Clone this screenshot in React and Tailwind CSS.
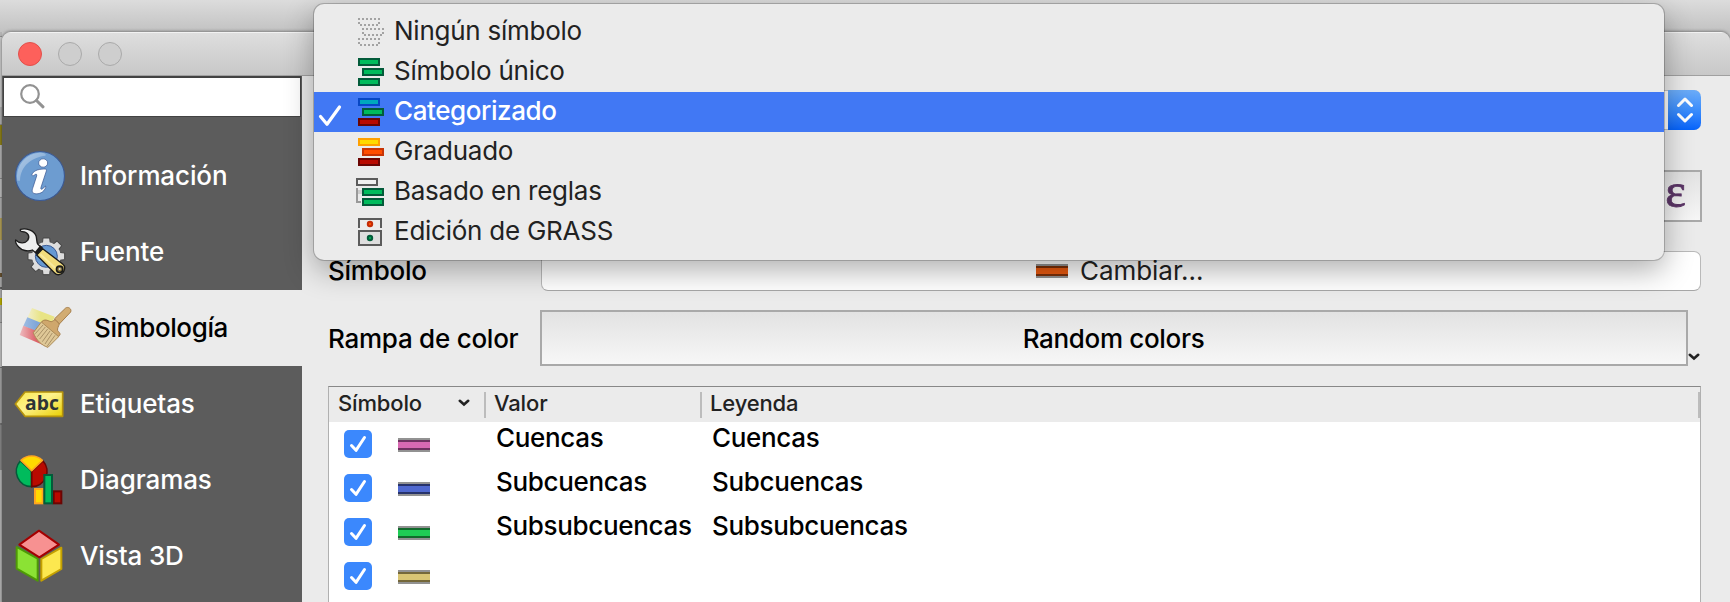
import React from "react";

/* ---------- sidebar icons ---------- */

const InfoIcon = () => (
  <svg width="52" height="52" viewBox="42 30 156 156">
    <defs>
      <linearGradient id="infoGloss" x1="0" y1="0" x2="1" y2="1">
        <stop offset="0" stopColor="#fff" stopOpacity=".45" />
        <stop offset="1" stopColor="#fff" stopOpacity=".1" />
      </linearGradient>
    </defs>
    <circle cx="120" cy="108" r="73.5" fill="#6d9cd0" stroke="#3c5a94" strokeWidth="3.5" />
    <path d="M52 122 C46 78 76 40 120 38 C134 38 140 42 136 47 C100 52 62 72 60 122 Z" fill="url(#infoGloss)" />
    <g fill="#fff" stroke="#34508c" strokeWidth="2">
      <ellipse cx="129.500" cy="69" rx="13.500" ry="12.500" />
      <path d="M97 101 C104 90 118 87 136 87 C139 87 140 90 139 93 L123 142 C121 148 124 149 128 146 L137 138 C139 143 133 151 127 156 C118 163 99 164 97 155 C96 151 97 148 99 142 L110 108 C111 103 109 101 105 104 L99 108 C96 107 95 104 97 101 Z" />
    </g>
  </svg>
);

const TEETH = [0, 45, 90, 135, 180, 225, 270, 315];

const SourceIcon = () => (
  <svg width="52" height="52" viewBox="42 258 156 156">
    <g stroke="#444" strokeWidth="3" fill="#dcdcdc">
      {TEETH.map((a) => (
        <path key={a} d="M127 312 L129 294 H149 L151 312 Z" transform={`rotate(${a} 139 349)`} />
      ))}
    </g>
    <circle cx="139" cy="349" r="43" fill="#dedede" />
    <circle cx="139" cy="349" r="33" fill="#6699d2" stroke="#3c5a94" strokeWidth="3" />
    <path
      d="M62 268 C78 264 101 270 108 287 C111 296 109 305 113 312 L122 321 L108 339 L97 330 C83 336 65 331 56 321 C49 313 45 306 47 300 C58 311 75 311 83 301 C91 289 84 276 67 275 C62 275 59 270 62 268 Z"
      fill="#eeefef" stroke="#1d1d1d" strokeWidth="4" strokeLinejoin="round"
    />
    <path d="M121 316 L130 324 L112 345 L104 337 Z" fill="#1a1a1a" />
    <path d="M128 326 L188 372 C200 382 192 402 177 404 C171 405 167 402 163 398 L110 345 Z" fill="#f2dc7c" stroke="#1a1a1a" strokeWidth="4" strokeLinejoin="round" />
    <path d="M121 343 L166 384" stroke="#f8eaa0" strokeWidth="6" />
    <circle cx="179" cy="388" r="9.500" fill="#8c7a3c" stroke="#1a1a1a" strokeWidth="5" />
    <circle cx="179" cy="387" r="3" fill="#ddd" />
  </svg>
);

const SymbologyIcon = () => (
  <svg width="54" height="44" viewBox="57 52 162 132">
    <defs>
      <linearGradient id="fy" x1="0" x2="1"><stop offset="0" stopColor="#f2eecb" /><stop offset=".5" stopColor="#e8e485" /></linearGradient>
      <linearGradient id="fb" x1="0" x2="1"><stop offset="0" stopColor="#9dbce2" /><stop offset=".5" stopColor="#7fa6d9" /></linearGradient>
      <linearGradient id="fr" x1="0" x2="1"><stop offset="0" stopColor="#eebbbf" /><stop offset=".6" stopColor="#dc5f66" /></linearGradient>
    </defs>
    <path d="M96 58 L164 84 L150 118 L82 87 Z" fill="url(#fy)" />
    <path d="M82 86 L152 114 L142 142 L70 112 Z" fill="url(#fb)" />
    <path d="M70 111 L144 140 L145 176 L59 139 Z" fill="url(#fr)" />
    <path d="M163 91 L197 58 C204 53 216 60 212 70 L178 106 Z" fill="#d2ac72" stroke="#a67f4c" strokeWidth="3" />
    <path d="M127 97 C138 90 146 98 153 99 C160 99 163 90 168 95 L178 106 C176 113 171 119 173 126 C178 132 184 136 177 142 L165 150 L121 108 Z" fill="#cfa76c" stroke="#a67f4c" strokeWidth="3" strokeLinejoin="round" />
    <path d="M124 100 L176 144 L144 176 C126 171 108 154 100 132 Z" fill="#dfc897" stroke="#ab8b58" strokeWidth="3" strokeLinejoin="round" />
    <path d="M129 109 L106 135 M136 115 L112 144 M143 121 L119 151 M150 127 L127 159 M157 133 L135 166 M165 140 L142 172" stroke="#a99167" strokeWidth="3" />
  </svg>
);

const LabelIcon = () => (
  <svg width="50" height="28" viewBox="46 300 150 84">
    <defs>
      <linearGradient id="tag" x1="0" y1="0" x2="1" y2="1">
        <stop offset="0" stopColor="#fbe94e" /><stop offset=".45" stopColor="#fdf28c" /><stop offset="1" stopColor="#e9cf00" />
      </linearGradient>
    </defs>
    <path d="M50 342 L79 306 H192 V379 H79 Z" fill="url(#tag)" stroke="#b5930c" strokeWidth="5" strokeLinejoin="round" />
    <text x="130" y="360" textAnchor="middle" fontFamily="Open Sans, sans-serif" fontWeight="700" fontSize="58" fill="#2d3436">abc</text>
  </svg>
);

const DiagramIcon = () => (
  <svg width="50" height="52" viewBox="46 46 150 156">
    <g strokeWidth="5" strokeLinejoin="round">
      <path d="M99 98 L65 67 A46 46 0 0 0 99 144 Z" fill="#00bb5c" stroke="#035b3a" />
      <path d="M99 98 L133 67 A46 46 0 0 1 99 144 Z" fill="#b90a00" stroke="#6b0503" />
      <path d="M99 96 L67 65 A46 46 0 0 1 131 65 Z" fill="#ffda00" stroke="#ffa51f" />
    </g>
    <g strokeWidth="6">
      <rect x="109" y="151" width="23" height="43" fill="#ffda00" stroke="#ffa51f" />
      <rect x="165" y="158" width="23" height="36" fill="#b90a00" stroke="#6b0503" />
      <rect x="137" y="109" width="23" height="85" fill="#00bb5c" stroke="#035b3a" />
    </g>
  </svg>
);

const CubeIcon = () => (
  <svg width="50" height="54" viewBox="44 267 150 162">
    <g strokeWidth="6" strokeLinejoin="round">
      <path d="M52 321 L115 356 V422 L52 386 Z" fill="#8be234" stroke="#4e9a06" />
      <path d="M186 323 L126 357 V422 L186 387 Z" fill="#fce84f" stroke="#c4a000" />
      <path d="M119 272 L179 314 L120 352 L60 314 Z" fill="#f79191" stroke="#a40000" />
    </g>
  </svg>
);

/* ---------- menu icons ---------- */

const Bar = ({ x, y, fill, stroke }) => (
  <rect x={x + 1} y={y + 1} width="20" height="6" fill={fill} stroke={stroke} strokeWidth="2" />
);

const Bars = ({ colors }) => (
  <svg width="28" height="30" viewBox="0 0 28 30">
    {colors.map(([fill, stroke], i) => (
      <Bar key={i} x={i === 1 ? 6 : 2} y={1 + i * 10} fill={fill} stroke={stroke} />
    ))}
  </svg>
);

const GREEN = ["#00bb5c", "#035b3a"];
const DARK_RED = ["#b90a00", "#6b0503"];

const NoneIcon = () => (
  <svg width="28" height="30" viewBox="0 0 28 30" stroke="#a3a3a3" strokeWidth="2" fill="none">
    {[[2, 1], [6, 11], [2, 21]].map(([x, y]) => (
      <g key={y}>
        <path d={`M${x} ${y + 1}h22`} strokeDasharray="2 2" />
        <path d={`M${x + 2} ${y + 7}h20`} strokeDasharray="2 2" />
        <path d={`M${x} ${y + 5}h2M${x + 20} ${y + 5}h2`} />
      </g>
    ))}
  </svg>
);

const RulesIcon = () => (
  <svg width="28" height="30" viewBox="0 0 28 30">
    <Bar x={0} y={1} fill="#f0f0f0" stroke="#5b5b5b" />
    <path d="M1 11V25H5" stroke="#999" strokeWidth="2" fill="none" />
    <path d="M2 15H6" stroke="#ccc" strokeWidth="4" />
    <Bar x={6} y={11} fill={GREEN[0]} stroke={GREEN[1]} />
    <Bar x={6} y={21} fill={GREEN[0]} stroke={GREEN[1]} />
  </svg>
);

const GrassIcon = () => (
  <svg width="28" height="30" viewBox="0 0 28 30" strokeWidth="2" fill="none">
    <path d="M3 11V2H25V11" stroke="#5b5b5b" />
    <rect x="3" y="14" width="22" height="14" fill="#dedede" stroke="#5b5b5b" />
    <circle cx="14" cy="7" r="2.200" fill="#ff4d00" stroke="#c32b06" />
    <circle cx="14" cy="21" r="2.200" fill="#00a651" stroke="#035b3a" />
  </svg>
);

/* ---------- data ---------- */

const SIDEBAR = [
  { label: "Información", icon: <InfoIcon /> },
  { label: "Fuente", icon: <SourceIcon /> },
  { label: "Simbología", icon: <SymbologyIcon />, active: true },
  { label: "Etiquetas", icon: <LabelIcon /> },
  { label: "Diagramas", icon: <DiagramIcon /> },
  { label: "Vista 3D", icon: <CubeIcon /> },
];

const MENU = [
  { label: "Ningún símbolo", icon: <NoneIcon /> },
  { label: "Símbolo único", icon: <Bars colors={[GREEN, GREEN, GREEN]} /> },
  { label: "Categorizado", icon: <Bars colors={[["#00a9bd", "#0747c4"], GREEN, DARK_RED]} />, active: true },
  { label: "Graduado", icon: <Bars colors={[["#ffda00", "#ffa000"], ["#ff4d00", "#c83405"], DARK_RED]} /> },
  { label: "Basado en reglas", icon: <RulesIcon /> },
  { label: "Edición de GRASS", icon: <GrassIcon /> },
];

const ROWS = [
  { label: "Cuencas", fill: "bg-[#d869b2]", edge: "border-[#6f3260]" },
  { label: "Subcuencas", fill: "bg-[#4f68cf]", edge: "border-[#27336b]" },
  { label: "Subsubcuencas", fill: "bg-[#1fcb55]", edge: "border-[#116a2c]" },
  { label: "", fill: "bg-[#d9c574]", edge: "border-[#75683a]" },
];

const Swatch = ({ fill, edge }) => (
  <span className="block h-[14px] w-8 shrink-0 border-y-2 border-[#929292]">
    <span className={`block h-[10px] border-y-2 ${fill} ${edge}`} />
  </span>
);

const Chevron = () => (
  <svg width="12" height="8" viewBox="0 0 12 8" fill="none" stroke="#222" strokeWidth="2.600" strokeLinecap="round">
    <path d="M1.800 1.800 L6 5.500 L10.200 1.800" />
  </svg>
);

const Checkbox = () => (
  <span className="flex size-7 shrink-0 items-center justify-center rounded-[5px] bg-[#3b88fd]">
    <svg width="28" height="28" viewBox="0 0 28 28" fill="none" stroke="#fff" strokeWidth="3" strokeLinecap="round" strokeLinejoin="round">
      <path d="M7.500 15.500 L12 20.300 L20.500 7.500" />
    </svg>
  </span>
);

/* Sliver of the window lying behind the dialog */
const BackWindowEdge = () => (
  <div className="flex w-[2px] shrink-0 flex-col bg-[#b4b4b4] pt-[4px]">
    <div className="h-[71px] border-t border-[#8f8f8f] bg-[#cfcfcf]" />
    <div className="h-[18px] border-b border-[#8f8f8f]" />
    <div className="h-[20px] bg-[#928518]" />
    <div className="h-[34px] border-b border-[#8f8f8f] bg-[#b8b8b8]" />
    <div className="h-[19px] border-b border-[#8f8f8f] bg-[#c4c4c4]" />
    <div className="h-[20px]" />
    <div className="h-[22px] bg-[#b9a55b]" />
    <div className="h-[33px] bg-[#b8b8b8]" />
    <div className="h-[4px] bg-[#6b5430]" />
    <div className="h-[12px] border-b-2 border-[#666]" />
    <div className="h-[9px]" />
    <div className="h-[7px] bg-[#c0b400]" />
    <div className="h-[18px] border-b border-[#8f8f8f]" />
    <div className="h-[45px] border-b border-[#777] bg-[#c4c4c4]" />
    <div className="h-[57px] border-b-2 border-[#777] bg-[#a9a9a9]" />
    <div className="h-[45px] bg-[#8c8c8c]" />
    <div className="flex-1 bg-[#bdbdbd]" />
  </div>
);

const Sidebar = () => (
  <aside className="flex w-[300px] shrink-0 flex-col bg-[#5c5c5c]">
    <div className="ml-px mr-px flex h-[41px] shrink-0 items-center border border-t-2 border-[#434343] bg-white pl-4">
      <svg width="25" height="25" viewBox="0 0 25 25" className="-mt-[2px]" fill="none" stroke="#929292" strokeLinecap="round">
        <circle cx="10" cy="10" r="8.800" strokeWidth="2.200" />
        <path d="M16.500 16.500 L23 22.800" strokeWidth="3" />
      </svg>
    </div>
    <nav className="flex flex-col pt-[21px]">
      {SIDEBAR.map(({ label, icon, active }) => (
        <div
          key={label}
          className={`flex h-[76px] items-center ${
            active
              ? "bg-[#ebebeb] font-[470] tracking-[-0.4px] text-black"
              : "font-[450] tracking-[-0.12px] text-white"
          }`}
        >
          <div className={active ? "flex w-[92px] pl-[17px]" : "flex w-[78px] justify-start pl-3"}>{icon}</div>
          <span>{label}</span>
        </div>
      ))}
    </nav>
  </aside>
);

const SymbolTable = () => (
  <div className="flex h-[260px] w-[1373px] shrink-0 flex-col border border-t-[#888] border-r-[#b0b0b0] border-l-[#b0b0b0] bg-white">
    <div className="flex h-[35px] shrink-0 items-center bg-[#ebebeb] text-[22px] font-[450] tracking-[-0.15px] text-[#222]">
      <div className="mb-[3px] flex w-[155px] items-center justify-between pr-[14px] pl-[9px]">
        <span>Símbolo</span>
        <Chevron />
      </div>
      <div className="h-[26px] w-[2px] bg-[#bcbcbc]" />
      <div className="mb-[3px] w-[214px] pl-[8px]">Valor</div>
      <div className="h-[26px] w-[2px] bg-[#bcbcbc]" />
      <div className="mb-[3px] flex-1 pl-[8px]">Leyenda</div>
      <div className="h-[26px] w-[2px] bg-[#bcbcbc]" />
    </div>
    {ROWS.map(({ label, fill, edge }) => (
      <div key={fill} className="flex h-11 shrink-0 items-center tracking-[-0.32px]">
        <div className="flex w-[167px] items-center gap-[26px] pl-[15px]">
          <Checkbox />
          <div className="pt-[2px]"><Swatch fill={fill} edge={edge} /></div>
        </div>
        <div className="w-[216px] pb-[12px]">{label}</div>
        <div className="pb-[12px]">{label}</div>
      </div>
    ))}
  </div>
);

const Panel = () => (
  <main className="flex min-w-0 flex-1 flex-col bg-[#ebebeb] pl-[26px] text-black">
    <div className="mt-[14px] mr-[29px] flex h-10 shrink-0 justify-end rounded-[7px] border-y border-[#c4c4c4] bg-white">
      <div className="-my-px flex w-[33px] items-center justify-center rounded-r-[7px] bg-linear-to-b from-[#6cacf8] via-[#3b8dfc] to-[#0463fb]">
        <svg width="18" height="26" viewBox="0 0 18 26" fill="none" stroke="#fff" strokeWidth="3" strokeLinecap="round" strokeLinejoin="round">
          <path d="M2.500 8.500 L9 2 L15.500 8.500 M2.500 17.500 L9 24 L15.500 17.500" />
        </svg>
      </div>
    </div>
    <div className="mt-10 mr-7 flex h-[52px] shrink-0 justify-end">
      <div className="flex w-[53px] items-center justify-center border-2 border-[#a9a9a9] bg-linear-to-b from-[#e2e2e2] to-[#f6f6f6] font-['Liberation_Serif',serif] text-[49px] leading-none text-[#5b3566] [-webkit-text-stroke:0.8px_#5b3566]">
        <span className="-mt-[11px]">ε</span>
      </div>
    </div>
    <div className="mt-[29px] mr-[29px] flex h-10 shrink-0 items-center">
      <span className="w-[213px] tracking-[-0.25px]">Símbolo</span>
      <div className="flex h-10 flex-1 items-center gap-3 rounded-[7px] border border-[#b9b9b9] border-b-[#a6a6a6] bg-white pl-[494px] text-[#222]">
        <Swatch fill="bg-[#e8590f]" edge="border-[#7b2f08]" />
        <span className="font-normal tracking-[-0.05px]">Cambiar...</span>
      </div>
    </div>
    <div className="mt-[19px] mr-[29px] flex h-14 shrink-0 items-center">
      <span className="mt-[2px] w-[212px] tracking-[-0.25px]">Rampa de color</span>
      <div className="flex h-14 w-[1148px] items-center justify-center border-2 border-[#a9a9a9] bg-linear-to-b from-[#e2e2e2] to-[#f7f7f7] font-medium tracking-[-0.33px]">
        <span className="mt-[2px] mr-px">Random colors</span>
      </div>
      <div className="self-end pb-[5px]"><Chevron /></div>
    </div>
    <div className="mt-5 flex"><SymbolTable /></div>
  </main>
);

const RendererMenu = () => (
  <div className="absolute top-[4px] left-[314px] flex h-[256px] w-[1350px] flex-col rounded-[10px] bg-[#ebebeb] py-2 text-[#222] shadow-[0_0_0_1px_rgba(0,0,0,0.2),0_10px_30px_rgba(0,0,0,0.32)]">
    {MENU.map(({ label, icon, active }) => (
      <div
        key={label}
        className={`flex h-10 items-center ${
          active ? "bg-[#4178f4] font-[450] tracking-[-0.42px] text-white" : "font-normal tracking-[-0.25px]"
        }`}
      >
        <div className="flex w-[42px] pl-[4px]">
          {active && (
            <svg width="24" height="24" viewBox="0 0 24 24" className="mt-[7px]" fill="none" stroke="#fff" strokeWidth="3.200" strokeLinecap="round" strokeLinejoin="round">
              <path d="M2.500 12.500 L9 20.200 L21.500 3" />
            </svg>
          )}
        </div>
        {icon}
        <span className="mb-[2px] ml-[10px]">{label}</span>
      </div>
    ))}
  </div>
);

export default function App() {
  return (
    <div className="relative flex h-[602px] w-[1730px] flex-col overflow-hidden bg-[#c6c6c6] font-['Inter','Liberation_Sans',sans-serif] text-[26px] leading-none font-[450] whitespace-nowrap">
      <div className="h-[32px] shrink-0 bg-linear-to-b from-[#dcdcdc] to-[#c2c2c2]" />
      <div className="flex min-h-0 flex-1">
        <BackWindowEdge />
        <div className="flex min-w-0 flex-1 flex-col overflow-hidden rounded-t-[9px] shadow-[0_0_3px_1px_rgba(0,0,0,0.35)]">
          <header className="flex h-[44px] shrink-0 items-center gap-4 border-t border-b border-t-[#f2f2f2] border-b-[#a0a0a0] bg-linear-to-b from-[#dedede] to-[#c8c8c8] pl-4">
            <span className="size-6 rounded-full border border-[#e2504b] bg-[#fd605b]" />
            <span className="size-6 rounded-full border border-[#aaa] bg-[#cecece]" />
            <span className="size-6 rounded-full border border-[#aaa] bg-[#cecece]" />
          </header>
          <div className="flex min-h-0 flex-1">
            <Sidebar />
            <Panel />
          </div>
        </div>
      </div>
      <RendererMenu />
    </div>
  );
}
